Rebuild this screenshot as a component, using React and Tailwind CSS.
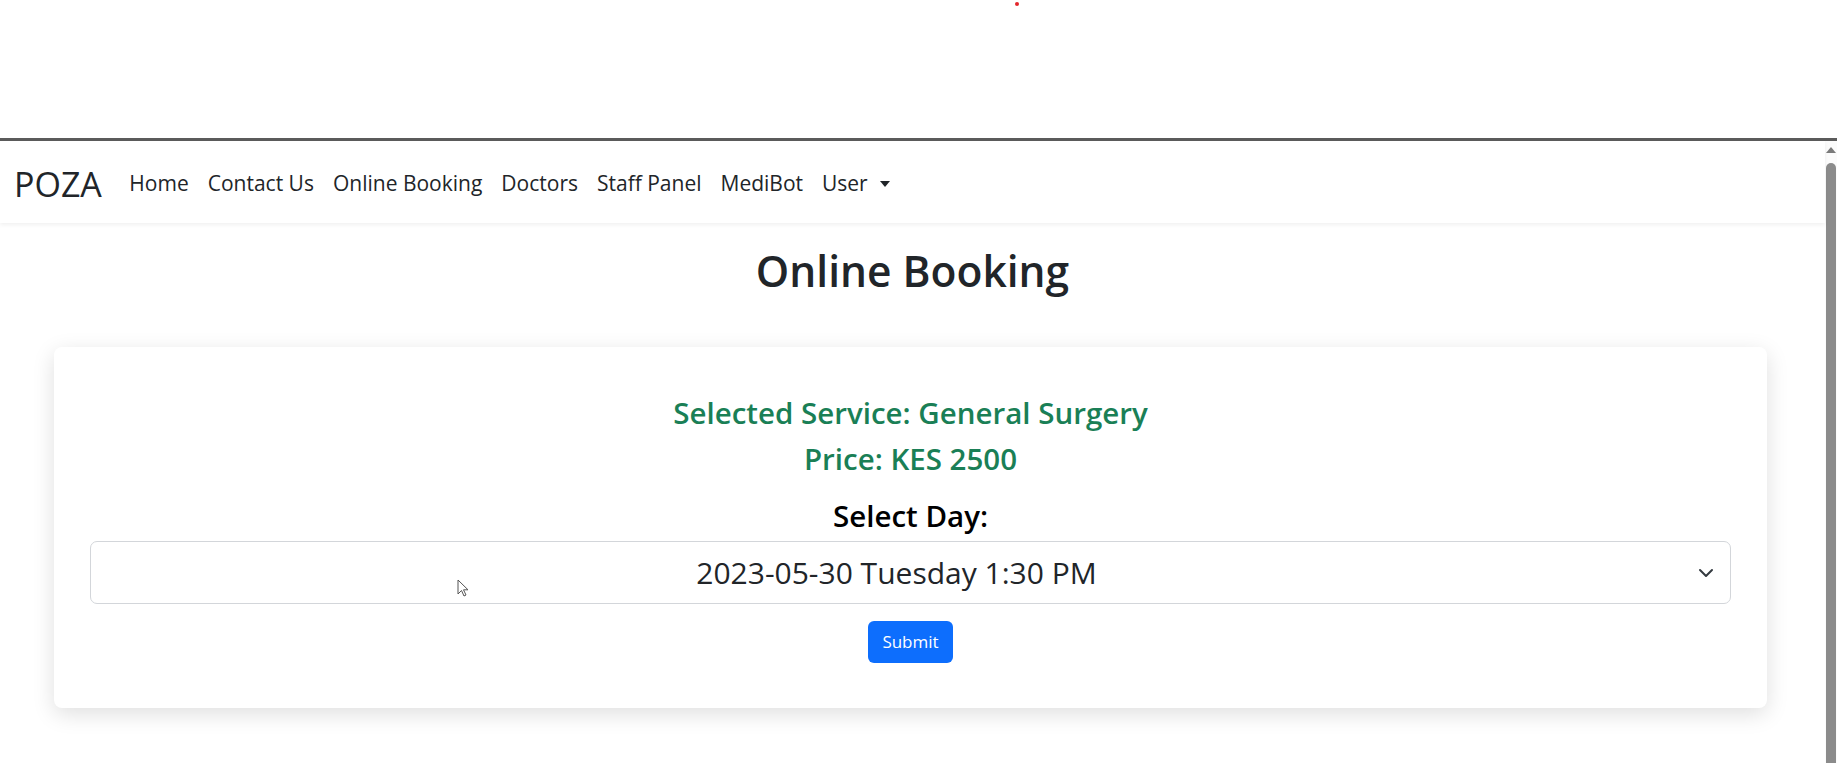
import React, { useState } from 'react';

const navLinks = ['Home', 'Contact Us', 'Online Booking', 'Doctors', 'Staff Panel', 'MediBot'];

const slots = ['2023-05-30 Tuesday 1:30 PM', '2023-05-31 Wednesday 10:00 AM', '2023-06-01 Thursday 2:00 PM'];

const Navbar = () => (
  <nav className="h-[82px] bg-white flex items-center pl-[14px] pt-[3px] shadow-[0_2px_4px_rgba(0,0,0,0.06)] relative z-10">
    <span className="text-[34px] text-[#212529] mr-[18px] leading-none">POZA</span>
    <ul className="flex items-center">
      {navLinks.map((link) => (
        <li key={link} className="px-[9.5px] text-[21px] text-[#212529]">
          {link}
        </li>
      ))}
      <li className="px-[9.5px] text-[21px] text-[#212529] flex items-center">
        User
        <span className="ml-[12px] w-0 h-0 border-l-[5px] border-r-[5px] border-t-[6px] border-l-transparent border-r-transparent border-t-[#212529]" />
      </li>
    </ul>
  </nav>
);

const BookingCard = () => {
  const [slot, setSlot] = useState(slots[0]);

  return (
    <div className="ml-[54px] mr-[58px] bg-white rounded-[8px] shadow-[0_6px_22px_rgba(0,0,0,0.13)] px-[36px] pt-[43px] pb-[45px] flex flex-col items-center">
      <h4 className="text-[29.5px] font-semibold text-[#1a7f56] leading-[45px]">Selected Service: General Surgery</h4>
      <h4 className="text-[29.5px] font-semibold text-[#1a7f56] leading-[45px] mt-[1px]">Price: KES 2500</h4>
      <label className="mt-[12px] text-[29.5px] font-semibold text-black leading-[45px]">Select Day:</label>
      <div className="relative w-full mt-[3px]">
        <select
          value={slot}
          onChange={(e) => setSlot(e.target.value)}
          className="appearance-none w-full h-[63px] border border-[#d3d6da] rounded-[7px] bg-white pl-[14px] pr-[42px] text-center text-[30px] text-[#212529] outline-none"
        >
          {slots.map((s) => (
            <option key={s} value={s}>{s}</option>
          ))}
        </select>
        <svg className="absolute right-[17px] top-1/2 -translate-y-1/2 pointer-events-none" width="16" height="16" viewBox="0 0 16 16">
          <path d="m2 5 6 6 6-6" fill="none" stroke="#343a40" strokeWidth="2" strokeLinecap="round" strokeLinejoin="round" />
        </svg>
        {/* mouse pointer */}
        <svg className="absolute left-[367px] top-[38px] pointer-events-none" width="12" height="19" viewBox="0 0 12 19">
          <path d="M1 1 L1 15 L4.5 11.5 L7 17 L9 16 L6.5 10.8 L11 10.8 Z" fill="#fff" stroke="#555" strokeWidth="1" strokeLinejoin="round" />
        </svg>
      </div>
      <button className="mt-[17px] h-[42px] w-[85px] bg-[#0d6efd] text-white text-[17px] rounded-[6px]">Submit</button>
    </div>
  );
};

const Scrollbar = () => (
  <div className="w-[12px] bg-[#fbfbfb] flex flex-col items-center pt-[6px]">
    <span className="w-0 h-0 border-l-[5px] border-r-[5px] border-b-[6px] border-l-transparent border-r-transparent border-b-[#7a7a7a]" />
    <div className="mt-[10px] w-[10px] flex-1 bg-[#8b8b8b] rounded-t-full" />
  </div>
);

export default function App() {
  return (
    <div className="w-[1837px] h-[763px] overflow-hidden bg-white flex flex-col font-['Open_Sans',sans-serif]">
      <div className="h-[138px] relative shrink-0">
        <span className="absolute left-[1015px] top-[2px] w-[4px] h-[4px] rounded-full bg-[#e3262b]" />
      </div>
      <div className="h-[3px] bg-[#5b5b5b] shrink-0" />
      <div className="flex-1 flex min-h-0">
        <div className="flex-1 flex flex-col">
          <Navbar />
          <h1 className="mt-[23px] text-center text-[42.5px] font-semibold text-[#212529] leading-[50px]">Online Booking</h1>
          <div className="mt-[51px]">
            <BookingCard />
          </div>
        </div>
        <Scrollbar />
      </div>
    </div>
  );
}
